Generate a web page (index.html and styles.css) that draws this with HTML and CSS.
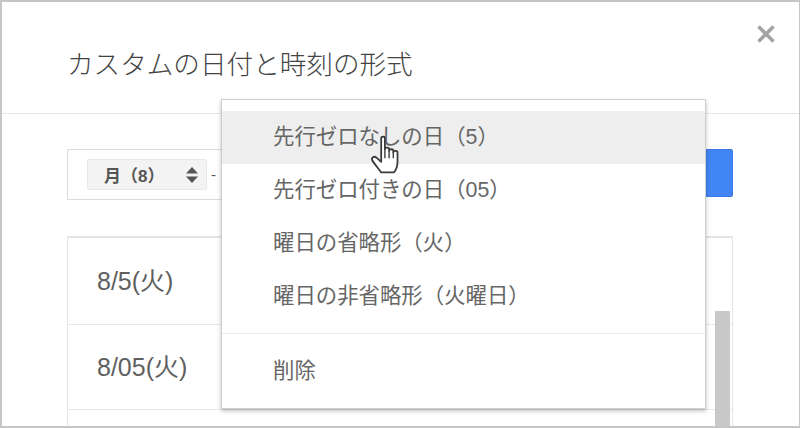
FILE: index.html
```html
<!DOCTYPE html>
<html lang="ja">
<head>
    <meta charset="UTF-8">
    <title>カスタムの日付と時刻の形式</title>
    <link rel="stylesheet" href="styles.css">
</head>
<body>
    <div class="dialog">
        <div class="header">
            <h1>カスタムの日付と時刻の形式</h1>
            <svg class="close" width="18" height="18" viewBox="0 0 18 18">
                <path d="M1.500 1.500L16.500 16.500M16.500 1.500L1.500 16.500" stroke="#a3a3a3" stroke-width="3.600" fill="none"/>
            </svg>
        </div>

        <div class="content">
            <div class="format-row">
                <div class="format-box">
                    <div class="chip">
                        <span class="chip-label">月（8）</span>
                        <svg width="12" height="18" viewBox="0 0 12 18">
                            <path d="M6 1L12 7.500H0Z M0 10.500H12L6 17Z" fill="#555"/>
                        </svg>
                    </div>
                    <span class="dash">-</span>
                </div>
                <div class="apply"></div>
            </div>

            <div class="list">
                <div class="list-row first">8/5(火)</div>
                <div class="list-row">8/05(火)</div>
                <div class="scrollbar"></div>
            </div>
        </div>

        <div class="menu">
            <div class="menu-item hover">先行ゼロなしの日（5）</div>
            <div class="menu-item">先行ゼロ付きの日（05）</div>
            <div class="menu-item">曜日の省略形（火）</div>
            <div class="menu-item">曜日の非省略形（火曜日）</div>
            <div class="menu-sep"></div>
            <div class="menu-item">削除</div>
        </div>

        <svg class="cursor" width="34" height="40" viewBox="0 0 32 38">
            <path d="M10.500 4C10.500 2 14 2 14 4V14.500C14 12.500 18 12.500 18 14.500V16C18 14 22 14 22 16V17.500C22 15.500 26 15.500 26 17.500V26C26 31 24 35 22.500 36.500H10.500C8 33 4 28.500 2 25C1 22.500 3.500 20.500 6 22.500L10.500 26.500Z" fill="#fff" stroke="#3a3a3a" stroke-width="1.700" stroke-linejoin="round"/>
            <path d="M14 14.500V23M18 16V23M22 17.500V23" stroke="#3a3a3a" stroke-width="1.300" fill="none"/>
        </svg>
    </div>
</body>
</html>
```

FILE: styles.css
```css
html, body {
    margin: 0;
    padding: 0;
}
body {
    font-family: "Liberation Sans", "Noto Sans CJK JP", sans-serif;
    background: white;
}
.dialog {
    position: relative;
    box-sizing: border-box;
    width: 800px;
    height: 428px;
    border: 2px solid #c6c6c6;
    border-right-width: 1px;
    overflow: hidden;
    background: white;
}
.header {
    position: relative;
    box-sizing: border-box;
    height: 112px;
    border-bottom: 1px solid #e6e6e6;
    padding: 47px 0 0 65px;
}
h1 {
    margin: 0;
    font-size: 26.600px;
    line-height: 32px;
    font-weight: 300;
    color: #444;
    white-space: nowrap;
}
.close {
    position: absolute;
    top: 23px;
    right: 24px;
}
.content {
    padding: 35px 66px 0 65px;
}
.format-row {
    display: flex;
    height: 51px;
}
.format-box {
    flex: 1;
    display: flex;
    align-items: center;
    box-sizing: border-box;
    height: 51px;
    border: 1px solid #dcdcdc;
    padding: 0 0 0 19px;
}
.chip {
    display: flex;
    align-items: center;
    justify-content: space-between;
    box-sizing: border-box;
    width: 120px;
    height: 31px;
    padding: 0 8px 0 16px;
    background: #f3f3f3;
    border: 1px solid #e8e8e8;
    border-radius: 2px;
}
.chip-label {
    font-size: 17px;
    font-weight: bold;
    color: #555;
}
.dash {
    margin-left: 4px;
    font-size: 15px;
    color: #555;
}
.apply {
    width: 120px;
    height: 48px;
    background: #4285f4;
    border: 1px solid #3b78e7;
    border-radius: 2px;
    box-sizing: border-box;
}
.list {
    position: relative;
    margin-top: 36px;
    height: 200px;
    border: 1px solid #e4e4e4;
    border-top-width: 2px;
    box-sizing: border-box;
}
.list-row {
    box-sizing: border-box;
    height: 85px;
    padding-left: 29px;
    border-bottom: 1px solid #e8e8e8;
    font-size: 25px;
    line-height: 84px;
    color: #5f5f5f;
}
.list-row.first {
    height: 87px;
    line-height: 86px;
}
.scrollbar {
    position: absolute;
    top: 73px;
    right: 2px;
    width: 15px;
    height: 130px;
    background: #c8c8c8;
}
.menu {
    position: absolute;
    top: 97px;
    left: 219px;
    box-sizing: border-box;
    width: 485px;
    height: 310px;
    padding-top: 11px;
    background: white;
    border: 1px solid #cfcfcf;
    box-shadow: 0 2px 4px rgba(0,0,0,0.25);
}
.menu-item {
    height: 53px;
    padding-left: 51px;
    font-size: 21.400px;
    line-height: 52px;
    color: #666;
    white-space: nowrap;
}
.menu-item.hover {
    background: #eeeeee;
}
.menu-sep {
    margin-top: 10px;
    margin-bottom: 11px;
    border-top: 1px solid #ebebeb;
}
.cursor {
    position: absolute;
    top: 132px;
    left: 368px;
}
```
